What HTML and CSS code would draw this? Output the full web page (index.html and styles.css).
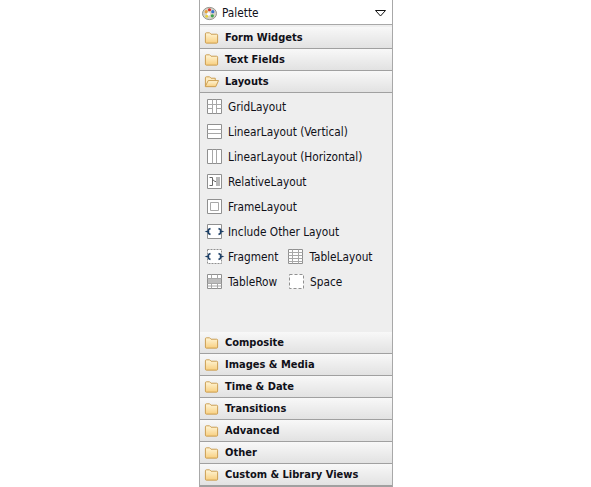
FILE: index.html
```html
<!DOCTYPE html>
<html lang="en">
<head>
    <meta charset="UTF-8">
    <title>Palette</title>
    <link rel="stylesheet" href="styles.css">
</head>
<body>
    <svg class="defs" width="0" height="0">
        <defs>
            <linearGradient id="folder-fill" x1="0" y1="0" x2="0" y2="1">
                <stop offset="0" stop-color="#fff6d8"/>
                <stop offset="1" stop-color="#f8cf80"/>
            </linearGradient>
            <symbol id="folder" viewBox="0 0 16 16">
                <path d="M1.500 13V4a1 1 0 0 1 1-1h3.500l1.500 1.500h6a1 1 0 0 1 1 1V13a1 1 0 0 1-1 1h-11a1 1 0 0 1-1-1z" fill="url(#folder-fill)" stroke="#c99a4c"/>
            </symbol>
            <symbol id="folder-open" viewBox="0 0 16 16">
                <path d="M1.500 13V4a1 1 0 0 1 1-1h3.500l1.500 1.500h4.500v2.500" fill="#fdebc0" stroke="#c99a4c"/>
                <path d="M1.500 13.500l3-6h11l-3 6.500h-11z" transform="translate(0 -0.500)" fill="url(#folder-fill)" stroke="#c99a4c"/>
            </symbol>
        </defs>
    </svg>

    <div class="palette">
        <div class="palette-title">
            <svg class="icon" viewBox="0 0 16 16">
                <ellipse cx="8" cy="8" rx="7.500" ry="6.500" fill="#d8d4c8" stroke="#8d8d86"/>
                <circle cx="4.500" cy="6" r="1.700" fill="#e8a13a"/>
                <circle cx="8" cy="4" r="1.700" fill="#d9372c"/>
                <circle cx="11.500" cy="6" r="1.700" fill="#3a6fd0"/>
                <circle cx="11" cy="10.500" r="1.700" fill="#3fa34a"/>
                <circle cx="7" cy="8.500" r="1.800" fill="#ffffff"/>
                <circle cx="5" cy="11" r="1.500" fill="#e8d23a"/>
            </svg>
            <span class="title-text">Palette</span>
            <svg class="menu-arrow" viewBox="0 0 11 7">
                <path d="M0.500 0.500h10l-5 5.500z" fill="#ffffff" stroke="#111111"/>
            </svg>
        </div>

        <div class="section first"><svg class="icon"><use href="#folder"/></svg><span>Form Widgets</span></div>
        <div class="section"><svg class="icon"><use href="#folder"/></svg><span>Text Fields</span></div>
        <div class="section"><svg class="icon"><use href="#folder-open"/></svg><span>Layouts</span></div>

        <div class="section-body">
            <div class="item">
                <svg class="icon" viewBox="0 0 15 15">
                    <path class="box" d="M0.500 0.500h14v14h-14z"/>
                    <path class="line" d="M0.500 5.500h14M5.500 0.500v14M9.500 0.500v14M0.500 9.500h5M9.500 9.500h5"/>
                </svg>
                <span>GridLayout</span>
            </div>
            <div class="item">
                <svg class="icon" viewBox="0 0 15 15">
                    <path class="box" d="M0.500 0.500h14v14h-14z"/>
                    <path class="line" d="M0.500 5.500h14M0.500 9.500h14"/>
                </svg>
                <span>LinearLayout (Vertical)</span>
            </div>
            <div class="item">
                <svg class="icon" viewBox="0 0 15 15">
                    <path class="box" d="M0.500 0.500h14v14h-14z"/>
                    <path class="line" d="M5.500 0.500v14M9.500 0.500v14"/>
                </svg>
                <span>LinearLayout (Horizontal)</span>
            </div>
            <div class="item">
                <svg class="icon" viewBox="0 0 15 15">
                    <path class="box" d="M0.500 0.500h14v14h-14z"/>
                    <path d="M9 3h4v9H9z" fill="#b8b8b8"/>
                    <path class="dark" d="M2.500 3.500h3v8h-3M5.500 5.500l2.500 2h1"/>
                </svg>
                <span>RelativeLayout</span>
            </div>
            <div class="item">
                <svg class="icon" viewBox="0 0 15 15">
                    <path class="box" d="M0.500 0.500h14v14h-14z"/>
                    <path class="line" d="M3.500 3.500h8v8h-8z"/>
                </svg>
                <span>FrameLayout</span>
            </div>
            <div class="item">
                <svg class="icon" viewBox="0 0 15 15">
                    <path class="box" d="M0.500 0.500h14v14h-14z"/>
                    <path class="brace" d="M3.500 4.500L1.500 5.500V7L0 7.500 1.500 8V9.500L3.500 10.500M11.500 4.500L13.500 5.500V7L15 7.500 13.500 8V9.500L11.500 10.500"/>
                </svg>
                <span>Include Other Layout</span>
            </div>
            <div class="item">
                <svg class="icon" viewBox="0 0 15 15">
                    <path class="box dashed" d="M0.500 0.500h14v14h-14z"/>
                    <path class="brace" d="M3.500 4.500L1.500 5.500V7L0 7.500 1.500 8V9.500L3.500 10.500M11.500 4.500L13.500 5.500V7L15 7.500 13.500 8V9.500L11.500 10.500"/>
                </svg>
                <span>Fragment</span>
                <svg class="icon second" viewBox="0 0 15 15">
                    <path class="box" d="M0.500 0.500h14v14h-14z"/>
                    <path class="line" d="M0.500 3.500h14M0.500 6.500h14M0.500 9.500h14M0.500 12.500h14M4.500 0.500v14M10.500 0.500v14"/>
                </svg>
                <span>TableLayout</span>
            </div>
            <div class="item">
                <svg class="icon" viewBox="0 0 15 15">
                    <path class="box" d="M0.500 0.500h14v14h-14z"/>
                    <path d="M1 5h13v4H1z" fill="#bdbdbd"/>
                    <path class="line" d="M0.500 4.500h14M0.500 9.500h14M0.500 12h14M4.500 9.500v5M10.500 9.500v5M4.500 0.500v4M10.500 0.500v4"/>
                </svg>
                <span>TableRow</span>
                <svg class="icon third" viewBox="0 0 15 15">
                    <path class="box dashed wide" d="M0.500 0.500h14v14h-14z"/>
                </svg>
                <span>Space</span>
            </div>
        </div>

        <div class="section"><svg class="icon"><use href="#folder"/></svg><span>Composite</span></div>
        <div class="section"><svg class="icon"><use href="#folder"/></svg><span>Images &amp; Media</span></div>
        <div class="section"><svg class="icon"><use href="#folder"/></svg><span>Time &amp; Date</span></div>
        <div class="section"><svg class="icon"><use href="#folder"/></svg><span>Transitions</span></div>
        <div class="section"><svg class="icon"><use href="#folder"/></svg><span>Advanced</span></div>
        <div class="section"><svg class="icon"><use href="#folder"/></svg><span>Other</span></div>
        <div class="section"><svg class="icon"><use href="#folder"/></svg><span>Custom &amp; Library Views</span></div>
    </div>
</body>
</html>
```

FILE: styles.css
```css
/* General styles */
body {
    margin: 0;
    padding: 0;
    background-color: #ffffff;
    font-family: "DejaVu Sans Condensed", "DejaVu Sans", sans-serif;
    font-stretch: condensed;
    font-size: 11.750px;
    color: #101018;
}

.defs {
    position: absolute;
}

svg {
    overflow: visible;
}

/* Palette panel */
.palette {
    width: 192px;
    height: 486px;
    margin-left: 199px;
    border-left: 1px solid #a8a8a8;
    border-right: 1px solid #a8a8a8;
    border-bottom: 1px solid #a0a0a0;
    background: #eeeeee;
    display: flex;
    flex-direction: column;
}

.palette-title {
    height: 25px;
    flex: none;
    box-sizing: border-box;
    display: flex;
    align-items: center;
    padding: 2px 6px 0 2px;
    background: #ffffff;
    border-bottom: 1px solid #a8a8a8;
}

.title-text {
    margin-left: 5px;
    flex: 1;
}

.menu-arrow {
    width: 11px;
    height: 7px;
}

.icon {
    width: 15px;
    height: 15px;
    flex: none;
}

/* Section headers */
.section {
    height: 22px;
    flex: none;
    box-sizing: border-box;
    display: flex;
    align-items: center;
    gap: 6px;
    padding-left: 4px;
    background: linear-gradient(#f8f8f8, #e2e2e2);
    border-bottom: 1px solid #a0a0a0;
    font-weight: bold;
    font-size: 11px;
}

.section.first {
    margin-top: 2px;
}

.section-body {
    height: 239px;
    flex: none;
    box-sizing: border-box;
    padding: 1px 0 0 7px;
}

/* Layout items */
.item {
    height: 25px;
    display: flex;
    align-items: center;
    gap: 6px;
}

.item .second {
    margin-left: 4px;
}

.item .third {
    margin-left: 6px;
}

.box {
    fill: #ffffff;
    stroke: #909090;
}

.dashed {
    stroke-dasharray: 2 1;
}

.wide {
    stroke-dasharray: 3 2;
}

.line {
    fill: none;
    stroke: #a8a8a8;
}

.dark {
    fill: none;
    stroke: #666666;
}

.brace {
    fill: none;
    stroke: #1c3f66;
    stroke-width: 1.500;
}
```
